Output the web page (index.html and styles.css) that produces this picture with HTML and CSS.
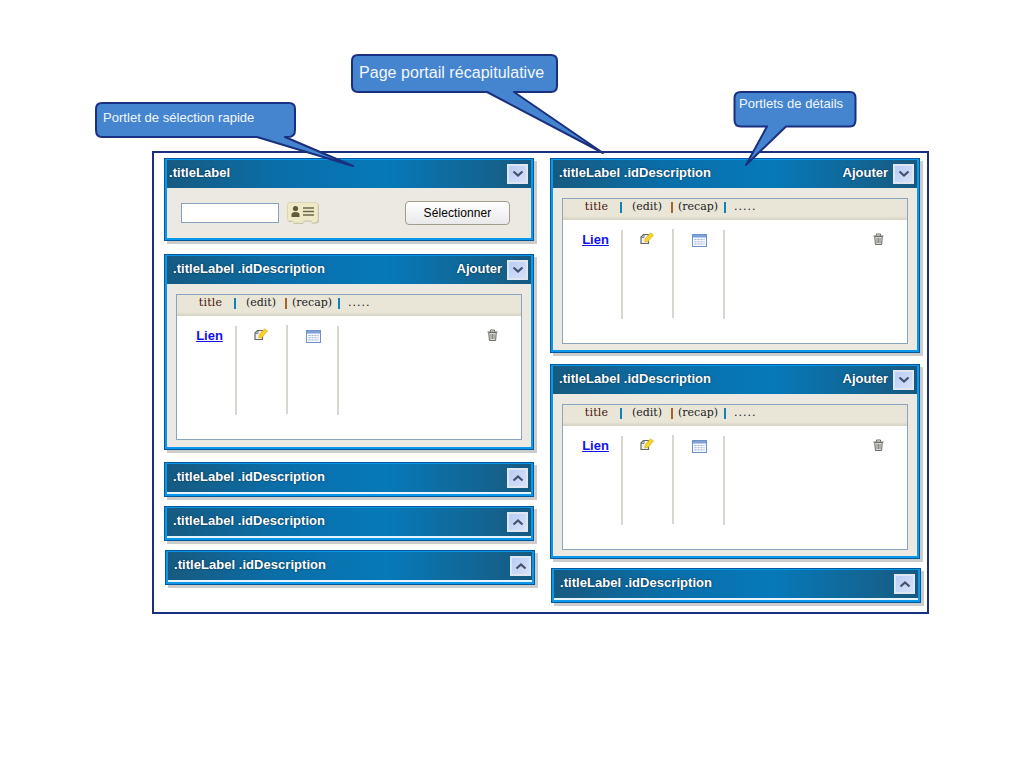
FILE: index.html
```html
<!DOCTYPE html>
<html lang="fr">
<head>
  <meta charset="UTF-8">
  <title>Page portail récapitulative</title>
  <link rel="stylesheet" href="styles.css">
</head>
<body>
  <svg width="0" height="0" class="defs">
    <symbol id="i-edit" viewBox="0 0 14 13">
      <path d="M1 5 L3.5 2.5 H8.5 V11.5 H1 Z" fill="#f2f2ee" stroke="#66665f" stroke-width="1.2"/>
      <path d="M1.5 5.5 H4 V3" fill="none" stroke="#66665f" stroke-width=".8"/>
      <path d="M5 7 L10.5 .8 L13.6 3 L8 9.4 L4.8 10 Z" fill="#f6d22a" stroke="#d8b21a" stroke-width=".6"/>
    </symbol>
    <symbol id="i-cal" viewBox="0 0 15 13">
      <rect x=".5" y=".5" width="14" height="12" fill="#f4f7fc" stroke="#6f93c8"/>
      <rect x="1" y="1" width="13" height="2.5" fill="#7fa2d6"/>
      <path d="M2.5 5.5 H12.5 M2.5 7.7 H12.5 M2.5 9.9 H12.5" stroke="#9db3d4" stroke-dasharray="2 1"/>
    </symbol>
    <symbol id="i-trash" viewBox="0 0 11 12">
      <path d="M.5 3 H10.5 M3.5 2.5 V1 H7.5 V2.5" fill="none" stroke="#66665f"/>
      <path d="M1.7 3.5 H9.3 L8.6 11.5 H2.4 Z" fill="#d8d8d4" stroke="#6c6c66"/>
      <path d="M4 5 V10 M5.5 5 V10 M7 5 V10" stroke="#77776f" stroke-width=".8"/>
    </symbol>
    <symbol id="i-down" viewBox="0 0 12 8">
      <path d="M1.5 1.5 L6 5.5 L10.5 1.5" fill="none" stroke="#44506f" stroke-width="2.2"/>
    </symbol>
    <symbol id="i-up" viewBox="0 0 12 8">
      <path d="M1.5 6.5 L6 2.5 L10.5 6.5" fill="none" stroke="#44506f" stroke-width="2.2"/>
    </symbol>
  </svg>

  <div class="frame">
    <div class="col col-left">

      <div class="portlet first">
        <div class="bar bar-small">
          <span class="title">.titleLabel</span>
          <span class="toggle"><svg class="chev"><use href="#i-down"/></svg></span>
        </div>
        <div class="select-body">
          <input class="search" type="text">
          <svg class="card" viewBox="0 0 32 22">
            <path d="M3 1.5 H30 Q32 1.5 32 4 V18 Q32 21 29 21.5 H25 L24 19.5 H17 L16 22 H7 L6 20 H3 Q1 20 1 18 V4 Z" fill="#b9b6a2"/>
            <path d="M3 .5 H29 Q31 .5 31 3 V17 Q31 20 28.5 20.5 H25 L24 18.5 H17 L16 21 H7 L6 19 H3 Q.5 19 .5 17 V3 Q.5 .5 3 .5 Z" fill="#efe9c8" stroke="#dcd6b8"/>
            <circle cx="8.5" cy="6.5" r="2.6" fill="#5f5a3a"/>
            <path d="M4.5 15 V12.5 Q4.5 10 8.5 10 Q12.5 10 12.5 12.5 V15 Z" fill="#5f5a3a"/>
            <path d="M16 6 H27 M16 9.5 H27 M16 13 H27" stroke="#6c6748" stroke-width="1.4"/>
          </svg>
          <button class="pick">Sélectionner</button>
        </div>
      </div>

      <div class="portlet gap-13">
        <div class="bar">
          <span class="title">.titleLabel .idDescription</span>
          <span class="add">Ajouter</span>
          <span class="toggle"><svg class="chev"><use href="#i-down"/></svg></span>
        </div>
        <div class="body tall">
          <div class="grid">
            <div class="grid-head">
              <span class="h-title">title</span><i class="sep"></i>
              <span class="h-edit">(edit)</span><i class="sep brown"></i>
              <span class="h-recap">(recap)</span><i class="sep"></i>
              <span class="h-more">.....</span>
            </div>
            <div class="grid-row">
              <div class="cell c-link"><a href="#">Lien</a></div>
              <div class="cell c-edit up"><svg class="ico-edit"><use href="#i-edit"/></svg></div>
              <div class="cell c-cal"><svg class="ico-cal"><use href="#i-cal"/></svg></div>
              <div class="c-trash"><svg class="ico-trash"><use href="#i-trash"/></svg></div>
            </div>
          </div>
        </div>
      </div>

      <div class="portlet closed gap-12">
        <div class="bar">
          <span class="title">.titleLabel .idDescription</span>
          <span class="toggle"><svg class="chev"><use href="#i-up"/></svg></span>
        </div>
      </div>

      <div class="portlet closed gap-9">
        <div class="bar">
          <span class="title">.titleLabel .idDescription</span>
          <span class="toggle"><svg class="chev"><use href="#i-up"/></svg></span>
        </div>
      </div>

      <div class="portlet closed gap-9 nudge">
        <div class="bar">
          <span class="title">.titleLabel .idDescription</span>
          <span class="toggle toggle-far"><svg class="chev"><use href="#i-up"/></svg></span>
        </div>
      </div>
    </div>

    <div class="col col-right">

      <div class="portlet">
        <div class="bar">
          <span class="title">.titleLabel .idDescription</span>
          <span class="add">Ajouter</span>
          <span class="toggle"><svg class="chev"><use href="#i-down"/></svg></span>
        </div>
        <div class="body">
          <div class="grid">
            <div class="grid-head">
              <span class="h-title">title</span><i class="sep"></i>
              <span class="h-edit">(edit)</span><i class="sep brown"></i>
              <span class="h-recap">(recap)</span><i class="sep"></i>
              <span class="h-more">.....</span>
            </div>
            <div class="grid-row">
              <div class="cell c-link"><a href="#">Lien</a></div>
              <div class="cell c-edit up"><svg class="ico-edit"><use href="#i-edit"/></svg></div>
              <div class="cell c-cal"><svg class="ico-cal"><use href="#i-cal"/></svg></div>
              <div class="c-trash"><svg class="ico-trash"><use href="#i-trash"/></svg></div>
            </div>
          </div>
        </div>
      </div>

      <div class="portlet gap-11">
        <div class="bar">
          <span class="title">.titleLabel .idDescription</span>
          <span class="add">Ajouter</span>
          <span class="toggle"><svg class="chev"><use href="#i-down"/></svg></span>
        </div>
        <div class="body">
          <div class="grid">
            <div class="grid-head">
              <span class="h-title">title</span><i class="sep"></i>
              <span class="h-edit">(edit)</span><i class="sep brown"></i>
              <span class="h-recap">(recap)</span><i class="sep"></i>
              <span class="h-more">.....</span>
            </div>
            <div class="grid-row">
              <div class="cell c-link"><a href="#">Lien</a></div>
              <div class="cell c-edit up"><svg class="ico-edit"><use href="#i-edit"/></svg></div>
              <div class="cell c-cal"><svg class="ico-cal"><use href="#i-cal"/></svg></div>
              <div class="c-trash"><svg class="ico-trash"><use href="#i-trash"/></svg></div>
            </div>
          </div>
        </div>
      </div>

      <div class="portlet closed gap-9 nudge">
        <div class="bar">
          <span class="title">.titleLabel .idDescription</span>
          <span class="toggle"><svg class="chev"><use href="#i-up"/></svg></span>
        </div>
      </div>
    </div>
  </div>

  <!-- bulles posees sur le schema -->
  <svg class="bubbles" width="1024" height="768">
    <path d="M102 103 H289 Q295 103 295 109 V130 Q295 137 288 137 H285 L353 166 L257 137 H102 Q96 137 96 130 V109 Q96 103 102 103 Z"/>
    <path d="M358 55 H551 Q557 55 557 61 V86 Q557 92 551 92 H514 L603 153 L487 92 H358 Q352 92 352 86 V61 Q352 55 358 55 Z"/>
    <path d="M741 92 H850 Q855.5 92 855.5 98 V120 Q855.5 126.5 850 126.5 H786 L746 165 L767 126.5 H741 Q734.5 126.5 734.5 120 V98 Q734.5 92 741 92 Z"/>
  </svg>
  <span class="bubble-text b1">Portlet de sélection rapide</span>
  <span class="bubble-text b2">Page portail récapitulative</span>
  <span class="bubble-text b3">Portlets de détails</span>
</body>
</html>
```

FILE: styles.css
```css
html, body {
  margin: 0;
  padding: 0;
  background: #fff;
}

body {
  font-family: "Liberation Sans", Arial, sans-serif;
  height: 768px;
  overflow: hidden;
}

.defs {
  position: absolute;
}

.frame {
  box-sizing: border-box;
  display: flex;
  width: 777px;
  height: 463px;
  margin: 151px 0 0 152px;
  border: 2px solid #1a2f7f;
}

.col-left {
  width: 370px;
  margin: 5px 0 0 10px;
}

.col-right {
  width: 370px;
  margin: 5px 0 0 16px;
}

.portlet {
  box-sizing: border-box;
  width: 370px;
  border: 1px solid #05599b;
  background: #ece9e2;
  box-shadow: inset 2px 0 0 #0b98ea, inset -2px 0 0 #0b98ea, inset 0 1px 0 #0b98ea, inset 0 -2px 0 #0b98ea, 3px 3px 0 #cccccc;
}

.first {
  height: 83px;
}

.gap-13 { margin-top: 13px; }
.gap-12 { margin-top: 12px; }
.gap-11 { margin-top: 11px; }
.gap-9 { margin-top: 9px; }

.nudge {
  margin-left: 1px;
}

.bar {
  box-sizing: border-box;
  display: flex;
  align-items: center;
  height: 28px;
  margin: 1px 2px 0;
  padding: 0 3px 4px 6px;
  background: linear-gradient(to right, #175a80 0%, #0a6ea8 30%, #0679b9 60%, #14628e 90%, #16597f 100%);
  color: #fff;
  font-size: 13px;
  font-weight: bold;
  text-shadow: 0 0 2px #0a2a44;
}

.bar-small {
  padding-left: 2px;
}

.title {
  flex: 1;
  letter-spacing: 0.04px;
}

.add {
  margin-right: 5px;
}

.toggle {
  box-sizing: border-box;
  display: flex;
  align-items: center;
  justify-content: center;
  width: 21px;
  height: 20px;
  margin-top: 4px;
  border: 2px solid #dfe6f0;
  background: linear-gradient(135deg, #b9cdf3, #d6e1fa);
}

.toggle-far {
  margin-right: -2px;
}

.chev {
  width: 12px;
  height: 8px;
}

.closed {
  height: 35px;
}

.closed .bar {
  box-sizing: content-box;
  height: 24px;
  border-bottom: 2px solid #e8f4fb;
}

.select-body {
  display: flex;
  align-items: center;
  height: 50px;
  padding-left: 16px;
}

.search {
  box-sizing: border-box;
  width: 98px;
  height: 20px;
  margin: 0;
  padding: 0;
  border: 1px solid #86a2c0;
  background: #fff;
}

.card {
  width: 32px;
  height: 22px;
  margin-left: 8px;
}

.pick {
  box-sizing: border-box;
  width: 105px;
  height: 24px;
  margin-left: 86px;
  padding: 0;
  border: 1px solid #a39c8d;
  border-radius: 4px;
  background: linear-gradient(to bottom, #ffffff, #e9e9e9);
  color: #000;
  font-family: "Liberation Sans", Arial, sans-serif;
  font-size: 12px;
  letter-spacing: 0.1px;
}

.body {
  box-sizing: border-box;
  height: 164px;
  padding: 10px 11px 0;
}

.body.tall {
  height: 165px;
}

.grid {
  box-sizing: border-box;
  height: 146px;
  border: 1px solid #8aa5c0;
  background: #fff;
}

.grid-head {
  box-sizing: border-box;
  display: flex;
  align-items: center;
  height: 21px;
  padding-bottom: 7px;
  background: linear-gradient(to bottom, #e9e6d8 0, #e9e6d8 80%, #d6d3c4 100%);
  font-family: "DejaVu Serif", serif;
  font-size: 11px;
  color: #222;
}

.h-title {
  width: 57px;
  text-align: center;
  padding-left: 10px;
  box-sizing: border-box;
  color: #4a1208;
  letter-spacing: 0.2px;
}

.h-edit {
  margin-left: 10px;
  width: 39px;
}

.h-recap {
  margin-left: 5px;
  width: 46px;
}

.h-more {
  margin-left: 8px;
  letter-spacing: 1px;
}

.sep {
  width: 2px;
  height: 11px;
  margin-top: 2px;
  background: #1283b8;
}

.sep.brown {
  background: #a3622c;
}

.grid-row {
  display: flex;
  padding-top: 10px;
}

.cell {
  box-sizing: border-box;
  display: flex;
  justify-content: center;
  height: 89px;
  padding-top: 3px;
  border-right: 2px solid #d8d6cf;
}

.c-link {
  width: 60px;
  padding-left: 7px;
  padding-top: 2px;
}

.c-link a {
  color: #1212e6;
  font-size: 13px;
  font-weight: bold;
}

.c-edit {
  width: 51px;
  padding-right: 2px;
}

.c-cal {
  width: 51px;
  padding-top: 4px;
  padding-left: 2px;
}

.up {
  margin-top: -1px;
}

.ico-edit {
  width: 14px;
  height: 13px;
}

.ico-cal {
  width: 15px;
  height: 13px;
}

.c-trash {
  flex: 1;
  display: flex;
  justify-content: flex-end;
  padding: 3px 23px 0 0;
}

.ico-trash {
  width: 11px;
  height: 12px;
}

.bubbles {
  position: absolute;
  left: 0;
  top: 0;
  pointer-events: none;
}

.bubbles path {
  fill: #4585cf;
  stroke: #1a2f7f;
  stroke-width: 2;
  stroke-linejoin: round;
}

.bubble-text {
  position: absolute;
  color: #f2f6fc;
  white-space: nowrap;
}

.b1 {
  left: 103px;
  top: 110px;
  font-size: 13px;
  letter-spacing: 0.04px;
}

.b2 {
  left: 359px;
  top: 64px;
  font-size: 16px;
  letter-spacing: 0.04px;
}

.b3 {
  left: 739px;
  top: 96px;
  font-size: 13px;
  letter-spacing: 0.04px;
}
```
